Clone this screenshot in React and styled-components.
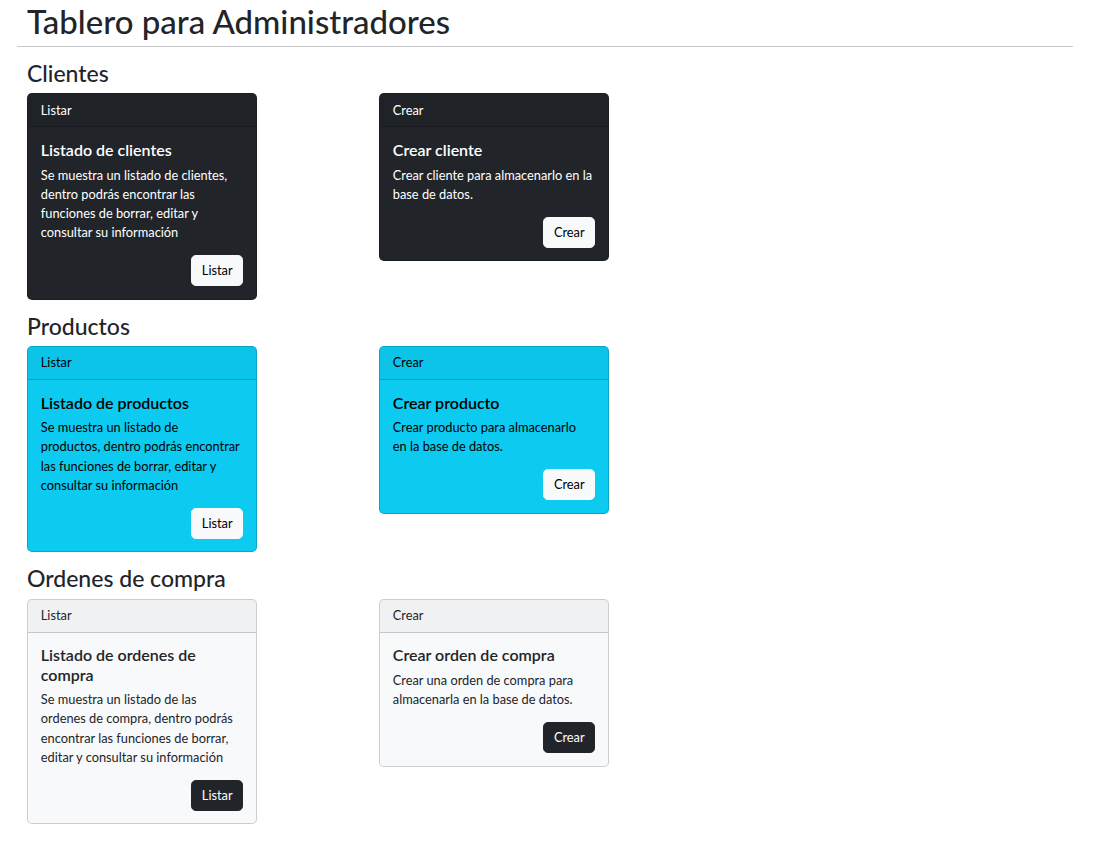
import React from 'react';
import styled, { createGlobalStyle, css } from 'styled-components';

const GlobalStyle = createGlobalStyle`
  body {
    margin: 0;
    background: #fff;
    color: #212529;
    font-family: Lato, "Open Sans", sans-serif;
    font-size: 12.8px;
    line-height: 1.5;
  }
  * {
    box-sizing: border-box;
  }
`;

const variants = {
  dark: css`
    background-color: #212529;
    color: #fff;
  `,
  info: css`
    background-color: #0dcaf0;
    color: #000;
  `,
  light: css`
    background-color: #f8f9fa;
    color: #212529;
  `,
};

const Page = styled.div`
  padding: 0 34px 20px 17px;
`;

const Title = styled.h1`
  margin: 1.5px 0 0;
  padding-left: 10px;
  font-size: 33px;
  font-weight: 500;
  line-height: 38.4px;
`;

const Rule = styled.hr`
  margin: 6px 0 13px;
  border: 0;
  border-top: 1px solid #c8c9ca;
`;

const Content = styled.div`
  padding-left: 10px;
`;

const Section = styled.section`
  margin-bottom: 12.8px;
`;

const SectionTitle = styled.h3`
  margin: 0 0 6.4px;
  font-size: 23px;
  font-weight: 500;
  line-height: 26.9px;
`;

const CardRow = styled.div`
  display: grid;
  grid-template-columns: repeat(2, 230px);
  column-gap: 122px;
  align-items: start;
`;

const Card = styled.div`
  display: flex;
  flex-direction: column;
  border: 1px solid rgba(0, 0, 0, 0.175);
  border-radius: 5px;
  overflow: hidden;
  ${(p) => variants[p.$variant]}
`;

const CardHeader = styled.div`
  padding: 6.4px 12.8px;
  line-height: 19.2px;
  background-color: rgba(0, 0, 0, 0.03);
  border-bottom: 1px solid rgba(0, 0, 0, 0.175);
`;

const CardBody = styled.div`
  padding: 12.8px;
  display: flex;
  flex-direction: column;
`;

const CardTitle = styled.h5`
  margin: 0 0 6.4px;
  font-size: 16px;
  font-weight: 600;
  line-height: 19.2px;
`;

const CardText = styled.p`
  margin: 0 0 12.8px;
  line-height: 19.2px;
`;

const Actions = styled.div`
  display: flex;
  justify-content: flex-end;
`;

const Button = styled.button`
  font-family: inherit;
  font-size: 12.8px;
  line-height: 19.2px;
  padding: 4.8px 9.6px;
  border: 1px solid;
  border-radius: 4.8px;
  cursor: pointer;
  ${(p) =>
    p.$dark
      ? css`
          background-color: #212529;
          border-color: #212529;
          color: #fff;
        `
      : css`
          background-color: #f8f9fa;
          border-color: #f8f9fa;
          color: #000;
        `}
`;

// text lines kept as they break in the original layout
const sections = [
  {
    name: 'Clientes',
    variant: 'dark',
    cards: [
      {
        header: 'Listar',
        title: 'Listado de clientes',
        lines: [
          'Se muestra un listado de clientes,',
          'dentro podrás encontrar las',
          'funciones de borrar, editar y',
          'consultar su información',
        ],
        action: 'Listar',
      },
      {
        header: 'Crear',
        title: 'Crear cliente',
        lines: ['Crear cliente para almacenarlo en la', 'base de datos.'],
        action: 'Crear',
      },
    ],
  },
  {
    name: 'Productos',
    variant: 'info',
    cards: [
      {
        header: 'Listar',
        title: 'Listado de productos',
        lines: [
          'Se muestra un listado de',
          'productos, dentro podrás encontrar',
          'las funciones de borrar, editar y',
          'consultar su información',
        ],
        action: 'Listar',
      },
      {
        header: 'Crear',
        title: 'Crear producto',
        lines: ['Crear producto para almacenarlo', 'en la base de datos.'],
        action: 'Crear',
      },
    ],
  },
  {
    name: 'Ordenes de compra',
    variant: 'light',
    cards: [
      {
        header: 'Listar',
        title: 'Listado de ordenes de compra',
        lines: [
          'Se muestra un listado de las',
          'ordenes de compra, dentro podrás',
          'encontrar las funciones de borrar,',
          'editar y consultar su información',
        ],
        action: 'Listar',
      },
      {
        header: 'Crear',
        title: 'Crear orden de compra',
        lines: ['Crear una orden de compra para', 'almacenarla en la base de datos.'],
        action: 'Crear',
      },
    ],
  },
];

const ActionCard = ({ card, variant }) => (
  <Card $variant={variant}>
    <CardHeader>{card.header}</CardHeader>
    <CardBody>
      <CardTitle>{card.title}</CardTitle>
      <CardText>
        {card.lines.map((line, i) => (
          <React.Fragment key={line}>
            {line}
            {i < card.lines.length - 1 && <br />}
          </React.Fragment>
        ))}
      </CardText>
      <Actions>
        <Button $dark={variant === 'light'}>{card.action}</Button>
      </Actions>
    </CardBody>
  </Card>
);

export default function App() {
  return (
    <Page>
      <GlobalStyle />
      <Title>Tablero para Administradores</Title>
      <Rule />
      <Content>
        {sections.map((section) => (
          <Section key={section.name}>
            <SectionTitle>{section.name}</SectionTitle>
            <CardRow>
              {section.cards.map((card) => (
                <ActionCard key={card.title} card={card} variant={section.variant} />
              ))}
            </CardRow>
          </Section>
        ))}
      </Content>
    </Page>
  );
}
